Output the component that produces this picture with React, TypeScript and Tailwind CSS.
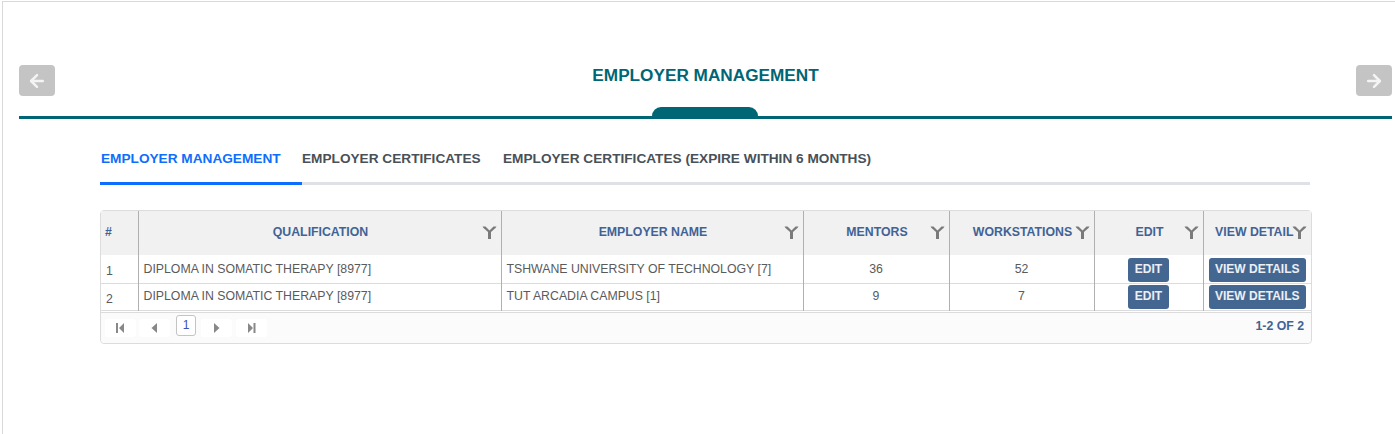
import { ArrowLeft, ArrowRight } from 'lucide-react';

const columns = [
  { label: '#', width: 'w-[37px]' },
  { label: 'QUALIFICATION', width: 'w-[363px]' },
  { label: 'EMPLOYER NAME', width: 'w-[302px]' },
  { label: 'MENTORS', width: 'w-[146px]' },
  { label: 'WORKSTATIONS', width: 'w-[145px]' },
  { label: 'EDIT', width: 'w-[109px]' },
  { label: 'VIEW DETAIL', width: 'w-[108px]' },
];

const rows = [
  { id: 1, name: 'TSHWANE UNIVERSITY OF TECHNOLOGY [7]', mentors: 36, stations: 52, height: 'h-[28px]', textPad: '', btnPad: 'pt-[2px]', idPad: 'pt-[4px]' },
  { id: 2, name: 'TUT ARCADIA CAMPUS [1]', mentors: 9, stations: 7, height: 'h-[27px]', textPad: 'pb-[1px]', btnPad: '', idPad: 'pt-[5px]' },
];

function FilterIcon() {
  return (
    <svg width="15" height="13" viewBox="0 0 15 13" className="absolute right-[4px] top-[15px]">
      <path d="M0.5 0.5 L14.5 0.5 L13.5 2 L9 6 L9 13 L6 13 L6 6 L1.5 2 Z M3.5 0.5 L7.5 4.5 L11.5 0.5 Z" fill="#7a7a7a" fillRule="evenodd" />
    </svg>
  );
}

function PagerIcon({ type }: { type: string }) {
  return (
    <svg width="9" height="10" viewBox="0 0 9 10" fill="#888888">
      {type === 'first' && <path d="M0 0h2v10H0z M8 0v10L3 5z" />}
      {type === 'prev' && <path d="M7 0v10L1.5 5z" />}
      {type === 'next' && <path d="M2 0v10l5.5-5z" />}
      {type === 'last' && <path d="M1 0v10l5-5z M6.5 0h2v10h-2z" />}
    </svg>
  );
}

function PagerButton({ type }: { type: string }) {
  return (
    <span className="flex h-[18px] w-[31px] items-center justify-center rounded-[3px] bg-white">
      <PagerIcon type={type} />
    </span>
  );
}

function ActionButton({ label, wide }: { label: string; wide?: boolean }) {
  return (
    <button className={`mx-auto block h-[24px] rounded-[3px] bg-[#446792] pb-[2px] text-[12px] font-bold text-white/90 ${wide ? 'w-[97px]' : 'w-[41px]'}`}>
      {label}
    </button>
  );
}

export default function App() {
  return (
    <div className="h-[434px] w-[1395px] overflow-hidden bg-white pl-[2px] pt-[1px] font-['Liberation_Sans',sans-serif]">
      <div className="h-full border-l border-t border-[#d9d9d9] pl-[16px] pr-[3px]">
        <div className="relative flex h-[117px] items-start justify-between border-b-[3px] border-[#006675]">
          <button className="mt-[63px] flex h-[31px] w-[36px] items-center justify-center rounded-[4px] bg-[#c4c4c4] text-[#f4f4f4]">
            <ArrowLeft size={20} strokeWidth={3} />
          </button>
          <h1 className="mt-[64px] text-[17.2px] font-bold leading-[18px] text-[#006675]">EMPLOYER MANAGEMENT</h1>
          <button className="mt-[63px] flex h-[31px] w-[36px] items-center justify-center rounded-[4px] bg-[#c4c4c4] text-[#f4f4f4]">
            <ArrowRight size={20} strokeWidth={3} />
          </button>
          <div className="absolute bottom-0 left-[633px] h-[9px] w-[106px] rounded-t-[10px] bg-[#006675]" />
        </div>

        <div className="ml-[81px] mt-[21px] w-[1210px]">
          <div className="flex h-[45px] items-start border-b-[3px] border-[#dee2e6] text-[13.65px] font-bold leading-[38px] text-[#495057]">
            <span className="-mb-[3px] h-[45px] w-[202px] border-b-[3px] border-[#0d6efd] pl-[1px] text-[#0d6efd]">EMPLOYER MANAGEMENT</span>
            <span className="w-[201px]">EMPLOYER CERTIFICATES</span>
            <span>EMPLOYER CERTIFICATES (EXPIRE WITHIN 6 MONTHS)</span>
          </div>

          <div className="mt-[25px] w-[1212px] rounded-[4px] border border-[#dcdcdc]">
            <table className="w-full table-fixed border-collapse text-[12.3px] text-[#5a5a5a]">
              <thead>
                <tr className="h-[44px] bg-[#f1f1f1]">
                  {columns.map((col, i) => (
                    <th
                      key={col.label}
                      className={`relative pb-[2px] font-bold text-[#3f6396] ${col.width} ${i > 0 ? 'border-l border-[#b0b0b0]' : ''} ${i === 0 ? 'pl-[4px] text-left' : 'text-center'}`}
                    >
                      <span className={i === 6 ? 'block whitespace-nowrap pl-[2px] pr-[8px]' : i === 0 ? 'block' : 'block pl-[2px]'}>{col.label}</span>
                      {i > 0 && <FilterIcon />}
                    </th>
                  ))}
                </tr>
              </thead>
              <tbody>
                {rows.map((row) => (
                  <tr key={row.id} className={`${row.height} border-b border-[#dcdcdc]`}>
                    <td className={`pl-[5px] ${row.idPad}`}>{row.id}</td>
                    <td className={`border-l border-[#b0b0b0] pl-[5px] ${row.textPad}`}>DIPLOMA IN SOMATIC THERAPY [8977]</td>
                    <td className={`border-l border-[#b0b0b0] pl-[5px] ${row.textPad}`}>{row.name}</td>
                    <td className={`border-l border-[#b0b0b0] text-center ${row.textPad}`}>{row.mentors}</td>
                    <td className={`border-l border-[#b0b0b0] text-center ${row.textPad}`}>{row.stations}</td>
                    <td className={`border-l border-[#b0b0b0] text-center ${row.btnPad}`}><ActionButton label="EDIT" /></td>
                    <td className={`border-l border-[#b0b0b0] text-center ${row.btnPad}`}><ActionButton label="VIEW DETAILS" wide /></td>
                  </tr>
                ))}
              </tbody>
            </table>
            <div className="mt-[1px] flex h-[31px] items-center justify-between rounded-b-[4px] border-t border-[#dcdcdc] bg-[#fbfbfb] pl-[4px] pr-[7px]">
              <div className="flex items-center gap-[3px]">
                <PagerButton type="first" />
                <PagerButton type="prev" />
                <span className="mb-[4px] ml-[3px] mr-[2px] flex h-[21px] w-[20px] items-center justify-center rounded-[3px] border border-[#c4c4c4] bg-white pb-[2px] text-[12px] text-[#3f51b5]">1</span>
                <PagerButton type="next" />
                <span className="ml-[1px]">
                  <PagerButton type="last" />
                </span>
              </div>
              <span className="mb-[2px] text-[12.3px] font-bold text-[#3f6396]">1-2 OF 2</span>
            </div>
          </div>
        </div>
      </div>
    </div>
  );
}
